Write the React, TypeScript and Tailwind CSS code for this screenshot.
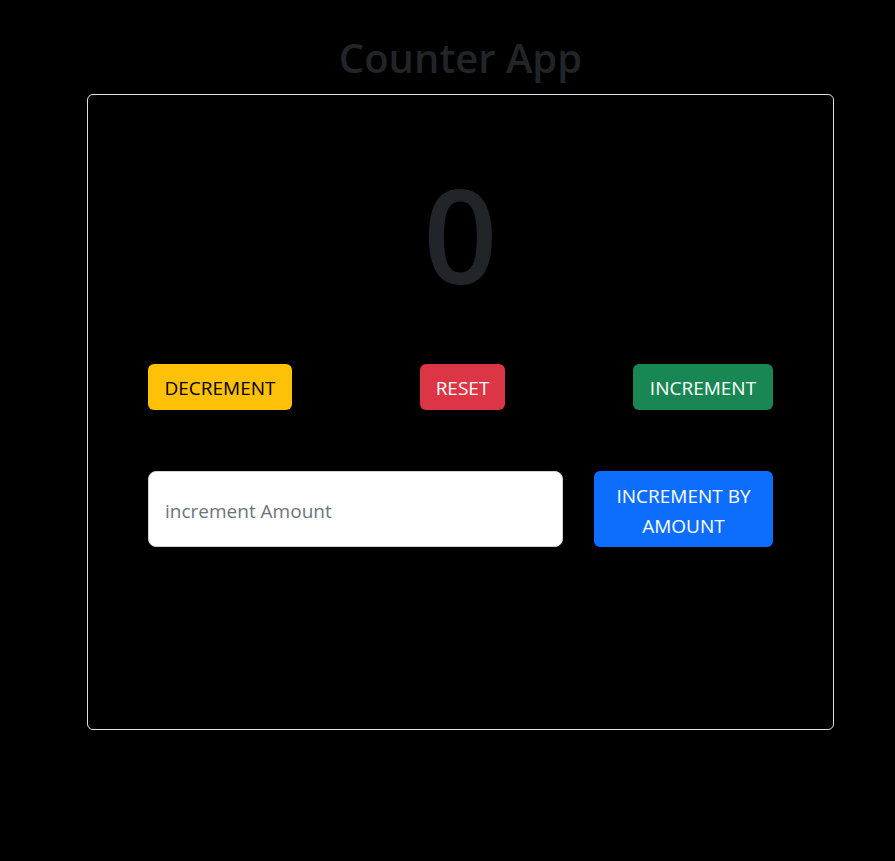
export default function App() {
  return (
    <div className="min-h-screen bg-black font-['Open_Sans',sans-serif]">
      <div className="ml-[87px] w-[747px] pt-[34px]">
        <h1 className="mb-[12px] text-center text-[40px] leading-[48px] font-semibold text-[#212529]">
          Counter App
        </h1>

        <div className="h-[636px] rounded-md border border-[#dee2e6] pl-[60px] pr-[60px] pt-[74px]">
          <div className="mb-[65px] text-center text-[130px] leading-[130px] font-semibold text-[#212529]">
            0
          </div>

          <div className="mb-[61px] flex items-center justify-between">
            <button className="h-[46px] w-[144px] rounded-md bg-[#ffc107] pt-[3px] text-[19px] text-black">
              DECREMENT
            </button>
            <button className="h-[46px] w-[85px] rounded-md bg-[#dc3545] pt-[3px] text-[19px] text-white">
              RESET
            </button>
            <button className="h-[46px] w-[140px] rounded-md bg-[#198754] pt-[3px] text-[19px] text-white">
              INCREMENT
            </button>
          </div>

          <div className="flex gap-[31px]">
            <input
              type="text"
              placeholder="increment Amount"
              className="h-[76px] flex-1 rounded-lg border border-[#ced4da] bg-white px-4 pt-[3px] text-[19px] text-[#212529] placeholder:text-[#6c757d] outline-none"
            />
            <button className="h-[76px] w-[179px] rounded-md bg-[#0d6efd] pt-[3px] text-[19px] leading-[30px] text-white">
              INCREMENT BY
              <br />
              AMOUNT
            </button>
          </div>
        </div>
      </div>
    </div>
  );
}
